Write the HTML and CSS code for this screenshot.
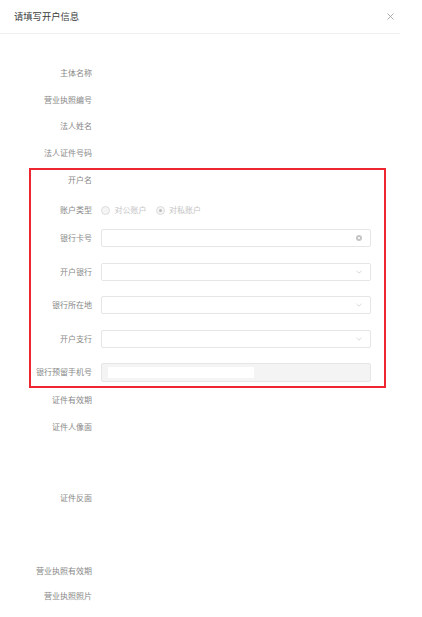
FILE: index.html
```html
<!DOCTYPE html>
<html lang="zh-CN">
<head>
<meta charset="utf-8">
<title>请填写开户信息</title>
<link rel="stylesheet" href="styles.css">
</head>
<body>
<div class="modal">
  <div class="header">
    <span class="title">请填写开户信息</span>
    <span class="close">
      <svg width="7" height="7" viewBox="0 0 7 7"><path d="M0.5 0.5L6.5 6.5M6.5 0.5L0.5 6.5" stroke="#9a9a9a" stroke-width="0.8" fill="none"/></svg>
    </span>
  </div>
  <div class="form">
    <div class="row"><span class="label">主体名称</span></div>
    <div class="row"><span class="label">营业执照编号</span></div>
    <div class="row"><span class="label">法人姓名</span></div>
    <div class="row"><span class="label">法人证件号码</span></div>

    <div class="box">
      <div class="brow brow-name"><span class="label blabel">开户名</span></div>
      <div class="brow brow-radio">
        <span class="label blabel">账户类型</span>
        <div class="radios">
          <span class="radio"><span class="dot"></span><span class="rtext">对公账户</span></span>
          <span class="radio checked"><span class="dot"></span><span class="rtext">对私账户</span></span>
        </div>
      </div>
      <div class="brow brow-input brow-first">
        <span class="label blabel">银行卡号</span>
        <div class="input">
          <span class="suffix">
            <svg width="6" height="6" viewBox="0 0 6 6"><circle cx="3" cy="3" r="3" fill="#c4c4c4"/><path d="M1.9 1.9L4.1 4.1M4.1 1.9L1.9 4.1" stroke="#fff" stroke-width="0.8"/></svg>
          </span>
        </div>
      </div>
      <div class="brow brow-input">
        <span class="label blabel">开户银行</span>
        <div class="input">
          <span class="suffix"><svg width="6" height="4" viewBox="0 0 6 4"><path d="M0.5 0.8L3 3.2L5.5 0.8" stroke="#c8c8c8" stroke-width="0.7" fill="none"/></svg></span>
        </div>
      </div>
      <div class="brow brow-input">
        <span class="label blabel">银行所在地</span>
        <div class="input">
          <span class="suffix"><svg width="6" height="4" viewBox="0 0 6 4"><path d="M0.5 0.8L3 3.2L5.5 0.8" stroke="#c8c8c8" stroke-width="0.7" fill="none"/></svg></span>
        </div>
      </div>
      <div class="brow brow-input">
        <span class="label blabel">开户支行</span>
        <div class="input">
          <span class="suffix"><svg width="6" height="4" viewBox="0 0 6 4"><path d="M0.5 0.8L3 3.2L5.5 0.8" stroke="#c8c8c8" stroke-width="0.7" fill="none"/></svg></span>
        </div>
      </div>
      <div class="brow brow-input">
        <span class="label blabel">银行预留手机号</span>
        <div class="input disabled">
          <span class="masked"></span>
        </div>
      </div>
    </div>

    <div class="row row-24"><span class="label">证件有效期</span></div>
    <div class="row row-upload row-portrait"><span class="label">证件人像面</span></div>
    <div class="row row-upload row-back"><span class="label">证件反面</span></div>
    <div class="row row-24 row-licdate"><span class="label">营业执照有效期</span></div>
    <div class="row row-24"><span class="label">营业执照照片</span></div>
  </div>
</div>
</body>
</html>
```

FILE: styles.css
```css
* { box-sizing: border-box; }
html, body {
  margin: 0;
  padding: 0;
  background: #fff;
  font-family: "Noto Sans CJK SC", "Noto Sans", sans-serif;
}
.modal {
  width: 400px;
}
.header {
  height: 34px;
  border-bottom: 1px solid #f0f0f0;
  display: flex;
  align-items: center;
  justify-content: space-between;
  padding: 0 6px 1px 14px;
}
.title {
  font-size: 9.3px;
  color: #3a3a3a;
  line-height: 12px;
}
.close {
  display: flex;
  width: 7px;
  height: 7px;
}
.form {
  padding-top: 26px;
}
.row {
  display: flex;
  align-items: center;
  height: 26.5px;
}
.label {
  flex-shrink: 0;
  width: 92px;
  text-align: right;
  font-size: 8px;
  color: #888;
  white-space: nowrap;
  line-height: 12px;
}
.row-24 {
  height: 24px;
}
.row-upload {
  align-items: flex-start;
}
.row-upload .label {
  line-height: 24px;
}
.row-portrait {
  margin-top: 3px;
  height: 71px;
}
.row-back {
  height: 73px;
}
.row-licdate {
  height: 25px;
  align-items: flex-start;
}
.row-licdate .label {
  line-height: 24px;
}

.box {
  margin: 2px 0 0 29px;
  width: 357px;
  border: 2px solid #ee2631;
  padding: 0 13px 5px 0;
}
.brow {
  display: flex;
  align-items: center;
}
.blabel {
  width: 61px;
}
.brow-name {
  height: 20px;
}
.brow-radio {
  height: 20px;
  margin-top: 10px;
}
.brow-input {
  height: 18px;
  margin-top: 15.5px;
}
.brow-first {
  margin-top: 9px;
}
.radios {
  margin-left: 9px;
  display: flex;
  align-items: center;
}
.radio {
  display: flex;
  align-items: center;
  margin-right: 9px;
}
.dot {
  width: 9px;
  height: 9px;
  border-radius: 50%;
  border: 1px solid #dcdcdc;
  background: #f5f5f5;
  display: flex;
  align-items: center;
  justify-content: center;
}
.checked .dot::after {
  content: "";
  width: 3px;
  height: 3px;
  border-radius: 50%;
  background: #bdbdbd;
}
.rtext {
  margin-left: 4.5px;
  font-size: 8px;
  color: #c4c4c4;
  line-height: 12px;
}
.input {
  margin-left: 9px;
  width: 270px;
  height: 18px;
  border: 1px solid #e6e6e6;
  border-radius: 2px;
  background: #fff;
  display: flex;
  align-items: center;
  justify-content: flex-end;
  padding-right: 8px;
}
.suffix {
  display: flex;
  align-items: center;
}
.input.disabled {
  background: #f4f4f4;
  justify-content: flex-start;
  padding: 0 0 0 6px;
  height: 19px;
}
.masked {
  width: 146px;
  height: 11px;
  background: #fff;
}
```
